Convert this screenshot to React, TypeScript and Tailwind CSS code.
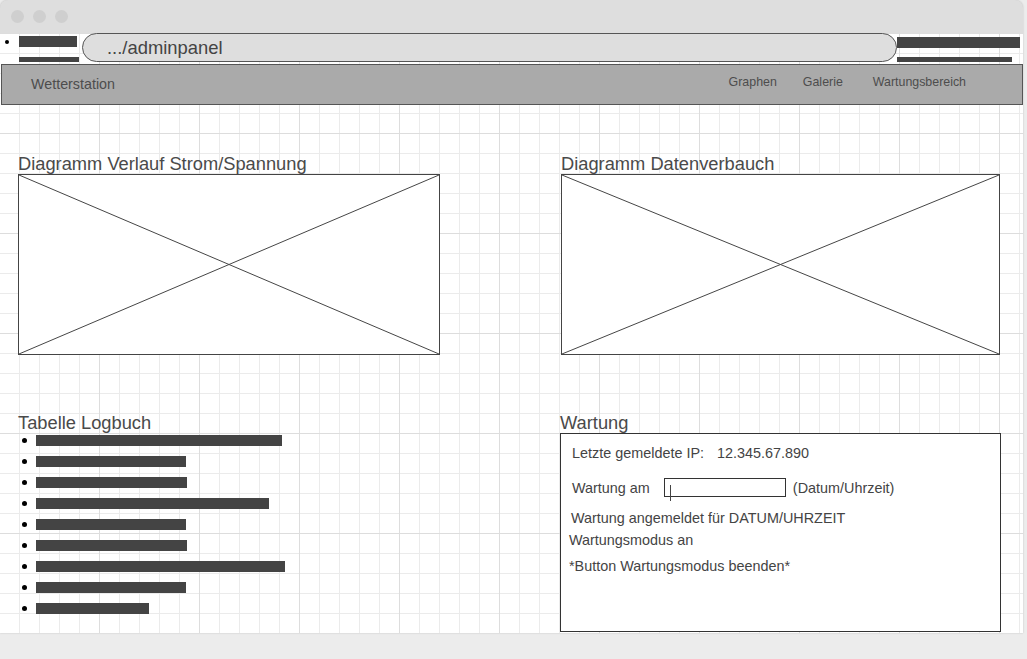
const logRows = [246, 150, 151, 233, 150, 151, 249, 150, 113];

const Placeholder = () => {
	return (
		<svg className="absolute inset-0 w-full h-full" viewBox="0 0 100 100" preserveAspectRatio="none">
			<line x1="0" y1="0" x2="100" y2="100" stroke="#444" strokeWidth="1" vectorEffect="non-scaling-stroke" />
			<line x1="100" y1="0" x2="0" y2="100" stroke="#444" strokeWidth="1" vectorEffect="non-scaling-stroke" />
		</svg>
	);
};

const Heading = ({ label }: { label: string }) => {
	return <h2 className="h-[20px] text-[18.3px] leading-[20px] text-[#4a4a4a] whitespace-nowrap">{label}</h2>;
};

const App = () => {
	return (
		<div className="w-full h-[659px] bg-[#ececec] font-['Liberation_Sans',Arial,sans-serif]">
			<div className="w-[1023px] h-[633px] flex flex-col bg-[#dedede] rounded-t-[8px] overflow-hidden shadow-[0_0_2px_rgba(0,0,0,0.2)]">
				{/* browser top bar */}
				<div className="h-[33px] flex items-center pl-[11px] gap-[9px] shrink-0">
					<div className="w-[13px] h-[13px] rounded-full bg-[#cfcfcf]"></div>
					<div className="w-[13px] h-[13px] rounded-full bg-[#cfcfcf]"></div>
					<div className="w-[13px] h-[13px] rounded-full bg-[#cfcfcf]"></div>
				</div>

				<div className="flex-1 flex flex-col bg-white bg-[linear-gradient(to_right,#dddddd_1px,transparent_1px),linear-gradient(to_bottom,#dddddd_1px,transparent_1px),linear-gradient(to_right,#ebebeb_1px,transparent_1px),linear-gradient(to_bottom,#ebebeb_1px,transparent_1px)] bg-[size:100px_100px,100px_100px,20px_20px,20px_20px] bg-[position:-1px_0]">
					{/* url row */}
					<div className="h-[31px] flex shrink-0">
						<div className="w-[19px] pt-[7px] pl-[5px]">
							<div className="w-[4px] h-[4px] rounded-full bg-black"></div>
						</div>
						<div className="w-[60px] flex flex-col">
							<div className="mt-[3px] h-[11px] w-[58px] bg-[#444]"></div>
							<div className="mt-[10px] h-[5px] w-[60px] bg-[#444]"></div>
						</div>
						<div className="ml-[3px] w-[815px] h-[29px] rounded-full border border-[#555] bg-[#dedede] flex items-center pl-[24px]">
							<span className="text-[18.4px] text-[#444]">.../adminpanel</span>
						</div>
						<div className="w-[123px] flex flex-col">
							<div className="mt-[4px] h-[11px] w-[123px] bg-[#444]"></div>
							<div className="mt-[9px] h-[5px] w-[115px] bg-[#444]"></div>
						</div>
					</div>

					{/* nav */}
					<div className="ml-[1px] w-[1022px] h-[41px] shrink-0 flex items-center border border-[#555] bg-[#aaaaaa]">
						<span className="pl-[29px] text-[14.3px] text-[#4d4d4d]">Wetterstation</span>
						<div className="ml-auto pr-[56px] pb-[5px] flex text-[12.4px] text-[#4d4d4d]">
							<span>Graphen</span>
							<span className="ml-[26px]">Galerie</span>
							<span className="ml-[30px]">Wartungsbereich</span>
						</div>
					</div>

					{/* content */}
					<div className="pl-[18px] pt-[49px] flex flex-col">
						<div className="flex">
							<div className="w-[422px] flex flex-col">
								<Heading label="Diagramm Verlauf Strom/Spannung" />
								<div className="relative h-[181px] border border-[#444] bg-white">
									<Placeholder />
								</div>
							</div>
							<div className="ml-[121px] w-[439px] flex flex-col">
								<Heading label="Diagramm Datenverbauch" />
								<div className="relative h-[181px] border border-[#444] bg-white">
									<Placeholder />
								</div>
							</div>
						</div>

						<div className="mt-[58px] flex">
							<div className="w-[422px] flex flex-col">
								<Heading label="Tabelle Logbuch" />
								<ul className="mt-[2px] flex flex-col gap-[10px]">
									{logRows.map((w, i) => (
										<li key={i} className="flex items-center h-[11px]">
											<div className="ml-[4px] mr-[9px] w-[5px] h-[5px] rounded-full bg-black"></div>
											<div className="h-[11px] bg-[#444]" style={{ width: w }}></div>
										</li>
									))}
								</ul>
							</div>
							<div className="ml-[120px] w-[441px] flex flex-col">
								<Heading label="Wartung" />
								<div className="h-[199px] border border-[#333] bg-white flex flex-col text-[14.4px] leading-[16px] text-[#444]">
									<div className="mt-[11px] ml-[11px] flex">
										<span>Letzte gemeldete IP:</span>
										<span className="ml-[13px]">12.345.67.890</span>
									</div>
									<div className="mt-[17px] ml-[11px] flex items-center">
										<span>Wartung am</span>
										<div className="relative ml-[14px] w-[122px] h-[19px] border border-[#333]">
											<div className="absolute left-[5px] top-[6px] w-[1px] h-[16px] bg-[#444]"></div>
										</div>
										<span className="ml-[7px]">(Datum/Uhrzeit)</span>
									</div>
									<div className="mt-[13px] ml-[10px]">Wartung angemeldet für DATUM/UHRZEIT</div>
									<div className="mt-[6px] ml-[8px]">Wartungsmodus an</div>
									<div className="mt-[10px] ml-[8px]">*Button Wartungsmodus beenden*</div>
								</div>
							</div>
						</div>
					</div>
				</div>
			</div>
		</div>
	);
};

export default App;
